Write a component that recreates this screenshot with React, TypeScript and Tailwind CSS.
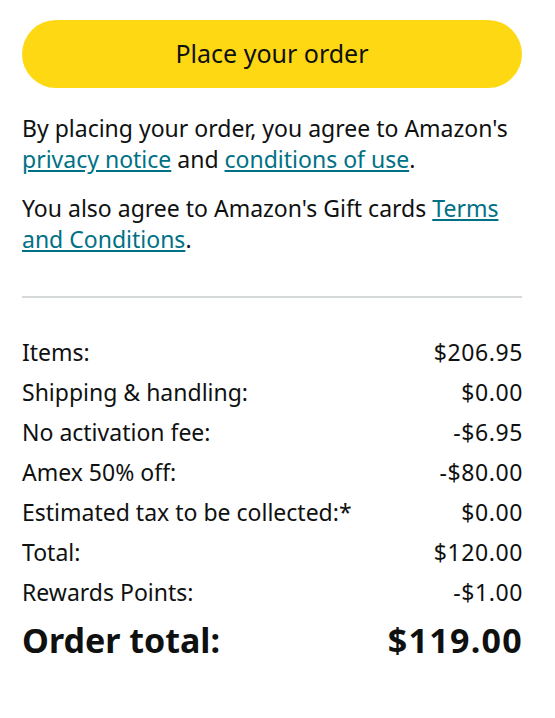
import React from 'react';

interface SummaryRow {
  label: string;
  amount: string;
}

const rows: SummaryRow[] = [
  { label: 'Items:', amount: '$206.95' },
  { label: 'Shipping & handling:', amount: '$0.00' },
  { label: 'No activation fee:', amount: '-$6.95' },
  { label: 'Amex 50% off:', amount: '-$80.00' },
  { label: 'Estimated tax to be collected:*', amount: '$0.00' },
  { label: 'Total:', amount: '$120.00' },
  { label: 'Rewards Points:', amount: '-$1.00' },
];

const App: React.FC = () => {
  return (
    <div className="w-[555px] min-h-[718px] bg-white pl-[22px] pr-[33px] pt-[20px] text-[#0F1111] font-['Noto_Sans',sans-serif]">
      <button className="flex items-center justify-center w-full h-[68px] rounded-full bg-[#FFD814] text-[25px] text-[#0F1111]">
        Place your order
      </button>

      <p className="mt-[25px] text-[23px] leading-[31px]">
        By placing your order, you agree to Amazon's{' '}
        <a href="#" className="text-[#007185] underline">
          privacy notice
        </a>{' '}
        and{' '}
        <a href="#" className="text-[#007185] underline">
          conditions of use
        </a>
        .
      </p>
      <p className="mt-[18px] text-[23px] leading-[31px]">
        You also agree to Amazon's Gift cards{' '}
        <a href="#" className="text-[#007185] underline">
          Terms and Conditions
        </a>
        .
      </p>

      <div className="mt-[41px] h-[2px] bg-[#D5D9D9]"></div>

      <div className="mt-[34px]">
        {rows.map((row, index) => {
          return (
            <div key={index} className="flex justify-between text-[23px] leading-[40px]">
              <span>{row.label}</span>
              <span className="tracking-[0.6px] -mr-[1px]">{row.amount}</span>
            </div>
          );
        })}
        <div className="flex justify-between mt-[6px] text-[34px] leading-[44px] font-bold">
          <span>Order total:</span>
          <span className="tracking-[1.3px] -mr-[1px]">$119.00</span>
        </div>
      </div>
    </div>
  );
};

export default App;
